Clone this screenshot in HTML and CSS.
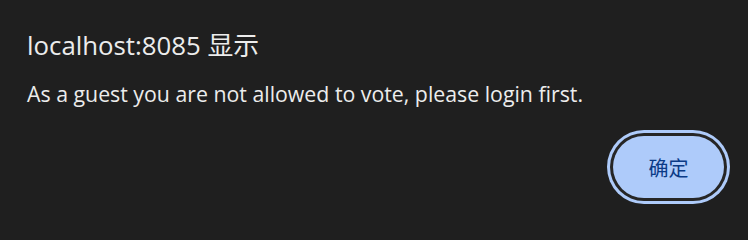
FILE: index.html
```html
<!DOCTYPE html>
<html lang="zh">
<head>
<meta charset="utf-8">
<link rel="stylesheet" href="styles.css">
</head>
<body>
<div class="dialog">
  <h1 class="title">localhost:8085 显示</h1>
  <p class="message">As a guest you are not allowed to vote, please login first.</p>
  <div class="actions">
    <button class="ok">确定</button>
  </div>
</div>
</body>
</html>
```
FILE: styles.css
```css
html, body {
  margin: 0;
  padding: 0;
  background: #1f1f1f;
  width: 748px;
  height: 226px;
  overflow: hidden;
}
.dialog {
  padding: 29px 24px 0 27px;
  font-family: "Open Sans", "Noto Sans CJK SC", sans-serif;
  color: #ececec;
}
.title {
  margin: 0;
  font-size: 25.8px;
  font-weight: 400;
  line-height: 32px;
}
.message {
  margin: 19px 0 0 0;
  font-size: 21.3px;
  line-height: 28px;
}
.actions {
  display: flex;
  justify-content: flex-end;
  margin-top: 28px;
}
.ok {
  width: 111px;
  height: 62px;
  padding: 0;
  border: none;
  border-radius: 31px;
  background: #aecbfa;
  color: #0a3a86;
  font-family: "Noto Sans CJK SC", sans-serif;
  font-size: 20px;
  box-shadow: 0 0 0 3px #262626, 0 0 0 6px #aecbfa;
}
```
